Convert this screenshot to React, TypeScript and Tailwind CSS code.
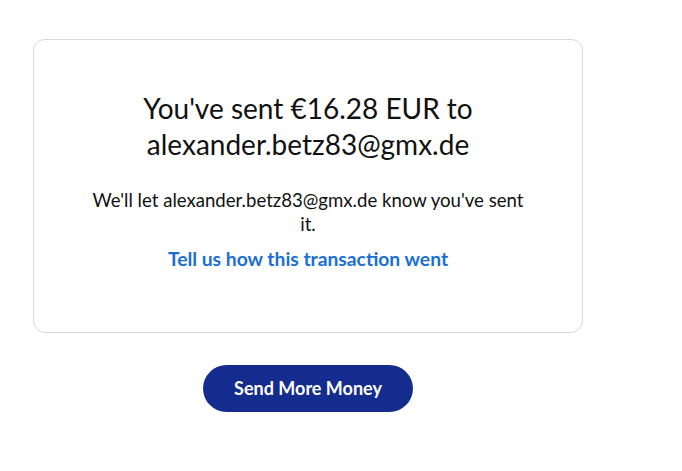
import React from "react";

export default function App() {
  return (
    <div className="min-h-screen bg-white pt-[39px] pl-[33px]" style={{ fontFamily: "Lato, 'Noto Sans', sans-serif" }}>
      <div className="w-[550px] flex flex-col items-center">
        <div className="w-full h-[294px] rounded-[12px] border border-[#d9d9d9] flex flex-col items-center pt-[50px]">
          <h1 className="text-[28px] leading-[36px] text-[#111] text-center w-[380px]">
            You've sent €16.28 EUR to alexander.betz83@gmx.de
          </h1>
          <p className="mt-[26px] text-[18.6px] leading-[24px] text-[#111] text-center w-[440px]">
            We'll let alexander.betz83@gmx.de know you've sent it.
          </p>
          <a className="mt-[11px] text-[19.3px] leading-[24px] font-bold text-[#1a6fd6]">
            Tell us how this transaction went
          </a>
        </div>
        <button className="mt-[32px] w-[210px] h-[47px] rounded-full bg-[#142c8e] text-white font-bold text-[18px]">
          Send More Money
        </button>
      </div>
    </div>
  );
}
